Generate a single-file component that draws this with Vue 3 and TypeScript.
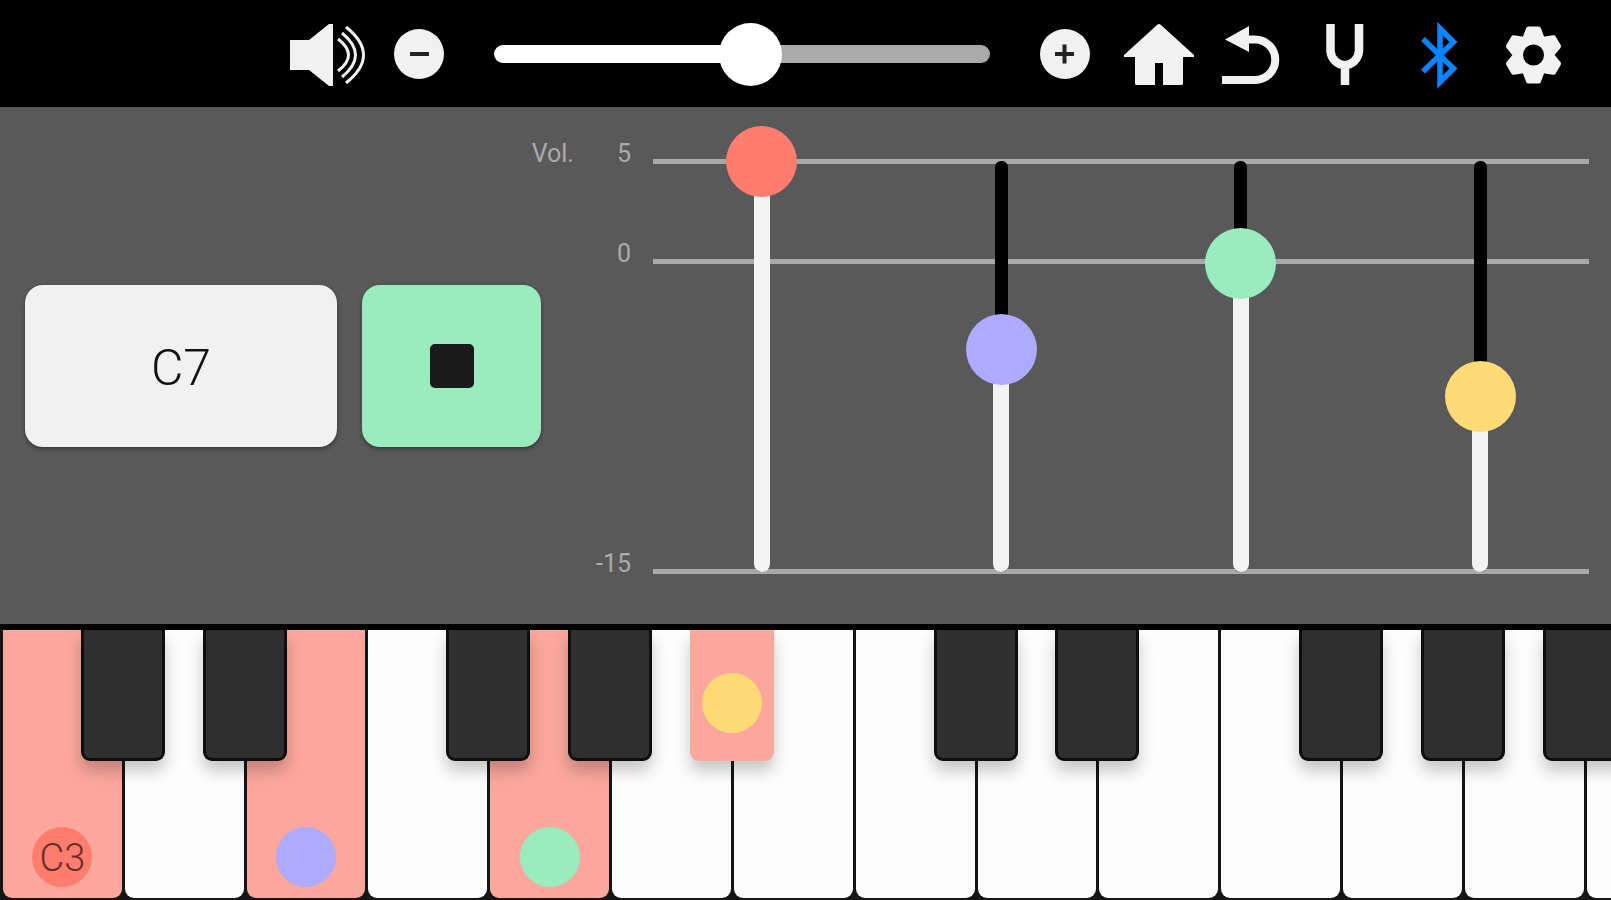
<script setup lang="ts">
import { computed, ref } from 'vue'

interface Fader {
  name: string
  tone: string
  level: number
}

interface Key {
  note: string
  sharp: boolean
  held?: boolean
  tone?: string
  label?: string
  sharpHeld?: boolean
  sharpTone?: string
}

const MIN = -15
const MAX = 5

const volume = ref(52)
const playing = ref(true)

const faders = ref<Fader[]>([
  { name: 'Root', tone: 'red', level: 5 },
  { name: 'Third', tone: 'violet', level: -4.15 },
  { name: 'Fifth', tone: 'green', level: 0 },
  { name: 'Seventh', tone: 'yellow', level: -6.45 },
])

const share = (level: number): string => `${((level - MIN) / (MAX - MIN)) * 100}%`

const chord: Record<string, Partial<Key>> = {
  C3: { held: true, tone: 'red', label: 'C3' },
  E3: { held: true, tone: 'violet' },
  G3: { held: true, tone: 'green' },
  A3: { sharpHeld: true, sharpTone: 'yellow' },
}

const keys = computed<Key[]>(() =>
  [3, 4].flatMap((octave) =>
    ['C', 'D', 'E', 'F', 'G', 'A', 'B'].map((letter) => {
      const note = `${letter}${octave}`
      return { note, sharp: letter !== 'E' && letter !== 'B', ...chord[note] }
    }),
  ),
)
</script>

<template>
  <div class="app">
    <header class="topbar">
      <svg class="speaker" viewBox="0 0 76 107" aria-hidden="true">
        <path fill="#f1f1f1" d="M0 40H19L39 24H43V86H39L19 70H0Z" />
        <g fill="none" stroke="#f1f1f1" stroke-width="3">
          <path d="M48 39Q69 55 48 71" />
          <path d="M52 33Q79 55 52 77" />
          <path d="M56 27Q91 55 56 83" />
        </g>
      </svg>
      <button class="round" type="button" aria-label="Volume down" @click="volume = Math.max(0, volume - 1)">
        <svg viewBox="0 0 50 50"><path d="M16 25H35" /></svg>
      </button>
      <input v-model.number="volume" class="volume" type="range" min="0" max="100" aria-label="Volume" :style="{ '--fill': volume + '%' }" />
      <button class="round" type="button" aria-label="Volume up" @click="volume = Math.min(100, volume + 1)">
        <svg viewBox="0 0 50 50"><path d="M15 25H34M24.500 15.500V34.500" /></svg>
      </button>
      <nav class="tools">
        <button type="button" aria-label="Home">
          <svg viewBox="0 0 94 107"><path fill="#f1f1f1" d="M49 24Q50 24 51 25L84 55V57H73V84Q73 85 71 85H53V63H45V85H27Q25 85 25 84V57H14V55L47 25Q48 24 49 24Z" /></svg>
        </button>
        <button type="button" aria-label="Back">
          <svg viewBox="0 0 94 107">
            <path fill="none" stroke="#f1f1f1" stroke-width="8" d="M18 80H51A20 20 0 0 0 51 39.500H40" />
            <path fill="#f1f1f1" d="M21 39.500L45 26V52Z" />
          </svg>
        </button>
        <button type="button" aria-label="Tuning">
          <svg viewBox="0 0 94 107"><path fill="none" stroke="#f1f1f1" stroke-width="8.500" d="M32.500 24V51A14.300 15.500 0 0 0 61 51V24M47 66V85" /></svg>
        </button>
        <button type="button" aria-label="Bluetooth">
          <svg viewBox="0 0 94 107"><path fill="none" stroke="#0a84ff" stroke-width="5.500" stroke-miterlimit="8" d="M31 39L61.500 68.500L48 82V28.500L61.500 42L31 71.500" /></svg>
        </button>
        <button type="button" aria-label="Settings">
          <svg viewBox="0 0 94 107">
            <g transform="translate(47.500 55)">
              <circle r="21" fill="#f1f1f1" />
              <path
                v-for="n in 6"
                :key="n"
                :transform="`rotate(${n * 60})`"
                fill="#f1f1f1"
                stroke="#f1f1f1"
                stroke-width="5"
                stroke-linejoin="round"
                d="M-5 -26H5L8 -18H-8Z"
              />
              <circle r="10.500" fill="#000" />
            </g>
          </svg>
        </button>
      </nav>
    </header>

    <main class="panel">
      <div class="actions">
        <button class="chord" type="button">C7</button>
        <button class="stop" type="button" aria-label="Stop" :aria-pressed="playing" @click="playing = !playing">
          <span class="square"></span>
        </button>
      </div>

      <section class="mixer" aria-label="Mixer">
        <div class="scale">
          <div class="tick"><span class="labels"><span>Vol.</span><span>5</span></span><i></i></div>
          <div class="space upper"></div>
          <div class="tick"><span class="labels"><span>0</span></span><i></i></div>
          <div class="space lower"></div>
          <div class="tick"><span class="labels"><span>-15</span></span><i></i></div>
        </div>
        <div class="faders">
          <div v-for="fader in faders" :key="fader.name" class="fader" :class="fader.tone">
            <div class="rail">
              <span class="rest"></span>
              <span class="fill" :style="{ height: share(fader.level) }"></span>
            </div>
            <input v-model.number="fader.level" type="range" :min="MIN" :max="MAX" step="0.05" :aria-label="`${fader.name} volume`" />
          </div>
        </div>
      </section>
    </main>

    <ul class="keyboard" aria-label="Keyboard">
      <li v-for="key in keys" :key="key.note">
        <button class="white" :class="{ held: key.held }" type="button" :aria-label="key.note">
          <span v-if="key.tone" class="dot" :class="key.tone">{{ key.label }}</span>
        </button>
        <button v-if="key.sharp || key.sharpHeld" class="black" :class="{ held: key.sharpHeld }" type="button" :aria-label="`${key.note} sharp`">
          <span v-if="key.sharpTone" class="dot" :class="key.sharpTone"></span>
        </button>
      </li>
    </ul>
  </div>
</template>

<style>
body {
  margin: 0;
  background: #1a1a1a;
}
</style>

<style scoped>
.app {
  display: grid;
  grid-template-rows: 107px minmax(500px, 517fr) minmax(200px, 276fr);
  min-height: 100vh;
  overflow: hidden;
  font-family: Roboto, "Liberation Sans", sans-serif;
}

button {
  margin: 0;
  padding: 0;
  border: 0;
  background: none;
  font: inherit;
  cursor: pointer;
}

.red { --tone: #ff7d6e; }
.violet { --tone: #adaaff; }
.green { --tone: #9aebbd; }
.yellow { --tone: #ffdb78; }

/* Top bar */
.topbar {
  display: flex;
  align-items: center;
  padding: 0 31px 0 18%;
  background: #000;
}

.speaker {
  flex: none;
  width: 76px;
  height: 107px;
  margin-right: 28px;
}

.round {
  flex: none;
  width: 50px;
  height: 50px;
  border-radius: 50%;
  background: #f1f1f1;
}

.round svg {
  display: block;
  fill: none;
  stroke: #222;
  stroke-width: 4;
}

.volume {
  flex: 1;
  min-width: 120px;
  height: 64px;
  margin: 0 50px;
  appearance: none;
  background: none;
}

.volume::-webkit-slider-runnable-track {
  height: 18px;
  border-radius: 9px;
  background: linear-gradient(to right, #fff var(--fill), #aaa var(--fill));
}

.volume::-webkit-slider-thumb {
  appearance: none;
  width: 63px;
  height: 63px;
  margin-top: -22px;
  border-radius: 50%;
  background: #fff;
}

.tools {
  display: flex;
  margin-left: 20px;
}

.tools svg {
  display: block;
  width: 94px;
  height: 107px;
}

/* Chord panel */
.panel {
  display: flex;
  align-items: center;
  padding: 0 22px 0 25px;
  background: #595959;
}

.actions {
  display: flex;
  flex: 516 1 0;
  gap: 25px;
  height: 162px;
}

.chord,
.stop {
  border-radius: 18px;
  box-shadow: 0 2px 4px rgba(0, 0, 0, 0.4);
}

.chord {
  flex: 312 1 0;
  padding-top: 4px;
  background: #f1f1f1;
  color: #111;
  font-size: 50px;
  font-weight: 300;
}

.stop {
  display: grid;
  flex: 179 1 0;
  place-items: center;
  background: #9aebbd;
}

.square {
  width: 44px;
  height: 44px;
  border-radius: 5px;
  background: #1b1a1b;
}

.mixer {
  display: grid;
  flex: 1048 1 0;
  grid-template-columns: 111px 1fr;
  align-items: center;
}

.scale {
  display: flex;
  grid-area: 1 / 1 / 2 / 3;
  flex-direction: column;
  height: 416px;
}

.tick {
  display: flex;
  align-items: flex-end;
  height: 6px;
}

.tick i {
  flex: 1;
  height: 5px;
  background: #a9a9a9;
}

.labels {
  display: flex;
  flex: none;
  justify-content: flex-end;
  gap: 43px;
  width: 90px;
  margin-right: 22px;
  color: #aaa;
  font-size: 25px;
  line-height: 20px;
}

.upper { flex: 94; }
.lower { flex: 304; }

.faders {
  display: flex;
  grid-area: 1 / 2;
  justify-content: space-between;
  padding: 2px 73px 0 74px;
}

.fader {
  display: grid;
  width: 71px;
  height: 482px;
  place-items: center;
}

.rail {
  display: grid;
  grid-area: 1 / 1;
  width: 16px;
  height: 411px;
  justify-items: center;
}

.rest {
  grid-area: 1 / 1;
  width: 13px;
  border-radius: 6px;
  background: #000;
}

.fill {
  grid-area: 1 / 1;
  align-self: end;
  width: 16px;
  border-radius: 0 0 8px 8px;
  background: #f3f3f3;
}

.fader input {
  grid-area: 1 / 1;
  width: 71px;
  height: 482px;
  margin: 0;
  appearance: none;
  background: none;
  writing-mode: vertical-lr;
  direction: rtl;
}

.fader input::-webkit-slider-thumb {
  appearance: none;
  width: 71px;
  height: 71px;
  border-radius: 50%;
  background: var(--tone);
}

/* Keyboard */
.keyboard {
  display: grid;
  grid-template-columns: repeat(14, calc(100% / 13.2 - 3px));
  column-gap: 3px;
  margin: 0;
  padding: 0 0 2px 3px;
  border-top: 6px solid #000;
  overflow: hidden;
  background: #151515;
  list-style: none;
}

.keyboard li {
  position: relative;
  display: grid;
}

.white {
  display: flex;
  align-items: flex-end;
  justify-content: center;
  padding-bottom: 11px;
  border-radius: 0 0 9px 9px;
  background: #fdfdfd;
}

.black {
  position: absolute;
  z-index: 1;
  top: 0;
  left: calc(100% - 41px);
  display: flex;
  align-items: flex-end;
  justify-content: center;
  width: 84px;
  height: 49%;
  padding-bottom: 28px;
  box-sizing: border-box;
  border: solid #0c0f0f;
  border-width: 0 3px 3px;
  border-radius: 0 0 9px 9px;
  background: #2f2f2f;
  box-shadow: 0 10px 16px rgba(0, 0, 0, 0.22);
}

.white.held {
  background: #fca79c;
}

.black.held {
  border: 0;
  background: #fca79c;
}

.dot {
  width: 60px;
  height: 60px;
  border-radius: 50%;
  background: var(--tone);
  color: #6b2f29;
  font-size: 38px;
  font-weight: 300;
  line-height: 62px;
  text-align: center;
}
</style>
